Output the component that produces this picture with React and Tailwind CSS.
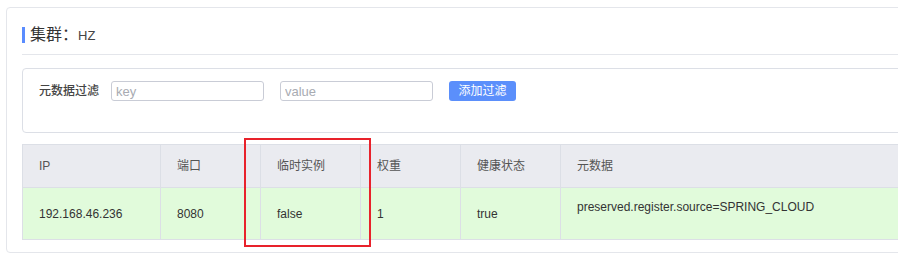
import React from 'react';

const columns = [
  { key: 'ip', title: 'IP' },
  { key: 'port', title: '端口' },
  { key: 'ephemeral', title: '临时实例' },
  { key: 'weight', title: '权重' },
  { key: 'healthy', title: '健康状态' },
  { key: 'metadata', title: '元数据' },
];

const instances = [
  {
    ip: '192.168.46.236',
    port: '8080',
    ephemeral: 'false',
    weight: '1',
    healthy: 'true',
    metadata: 'preserved.register.source=SPRING_CLOUD',
  },
];

const App = () => {
  return (
    <div className="relative w-[898px] h-[277px] overflow-hidden bg-white font-['Liberation_Sans','Noto_Sans_CJK_SC',sans-serif] text-[#333]">
      {/* Cluster card */}
      <div className="ml-[6px] mt-[7px] w-[940px] border border-[#e4e6eb] rounded-[4px] pt-[19px] pb-[12px] pl-[15px]">
        {/* Title */}
        <div className="pb-[11px] border-b border-[#e4e6eb]">
          <div className="flex items-center h-[16px]">
            <span className="w-[3px] h-[16px] bg-[#5a8cff]"></span>
            <span className="ml-[5px] text-[16px] leading-none text-[#333]">集群：</span>
            <span className="text-[13px] leading-none text-[#444]">HZ</span>
          </div>
        </div>

        {/* Metadata filter */}
        <div className="mt-[13px] h-[65px] border border-[#dcdfe6] rounded-[4px] pt-[12px] pl-[16px]">
          <div className="flex items-center h-[20px]">
            <span className="text-[12px] font-medium text-[#444] w-[60px]">元数据过滤</span>
            <input
              className="ml-[12px] w-[153px] h-[20px] border border-[#c9ccd6] rounded-[3px] px-[4px] text-[13px] outline-none placeholder:text-[#a8abb2]"
              placeholder="key"
            />
            <input
              className="ml-[16px] w-[153px] h-[20px] border border-[#c9ccd6] rounded-[3px] px-[4px] text-[13px] outline-none placeholder:text-[#a8abb2]"
              placeholder="value"
            />
            <button className="ml-[16px] w-[67px] h-[20px] bg-[#5b8ffb] rounded-[3px] text-white text-[12px] leading-none">
              添加过滤
            </button>
          </div>
        </div>

        {/* Instance table */}
        <div className="mt-[11px] grid grid-cols-[138px_100px_100px_100px_100px_1fr] border-t border-l border-[#dcdfe6] text-[12px]">
          {columns.map((col) => (
            <div
              key={col.key}
              className="h-[43px] flex items-center pl-[16px] bg-[#eaebf0] border-r border-b border-[#dcdfe6] text-[#555]"
            >
              {col.title}
            </div>
          ))}
          {instances.map((row) =>
            columns.map((col) =>
              col.key === 'metadata' ? (
                <div
                  key={col.key}
                  className="h-[52px] pt-[11px] pl-[16px] leading-4 bg-[#e1fbdb] border-r border-b border-[#dcdfe6] text-[#333]"
                >
                  {row[col.key]}
                </div>
              ) : (
                <div
                  key={col.key}
                  className="h-[52px] flex items-center pl-[16px] bg-[#e1fbdb] border-r border-b border-[#dcdfe6] text-[#333]"
                >
                  {row[col.key]}
                </div>
              )
            )
          )}
        </div>
      </div>

      {/* Highlight around the ephemeral column */}
      <div className="absolute left-[244px] top-[138px] w-[127px] h-[109px] border-2 border-[#e8222b]"></div>
    </div>
  );
};

export default App;
